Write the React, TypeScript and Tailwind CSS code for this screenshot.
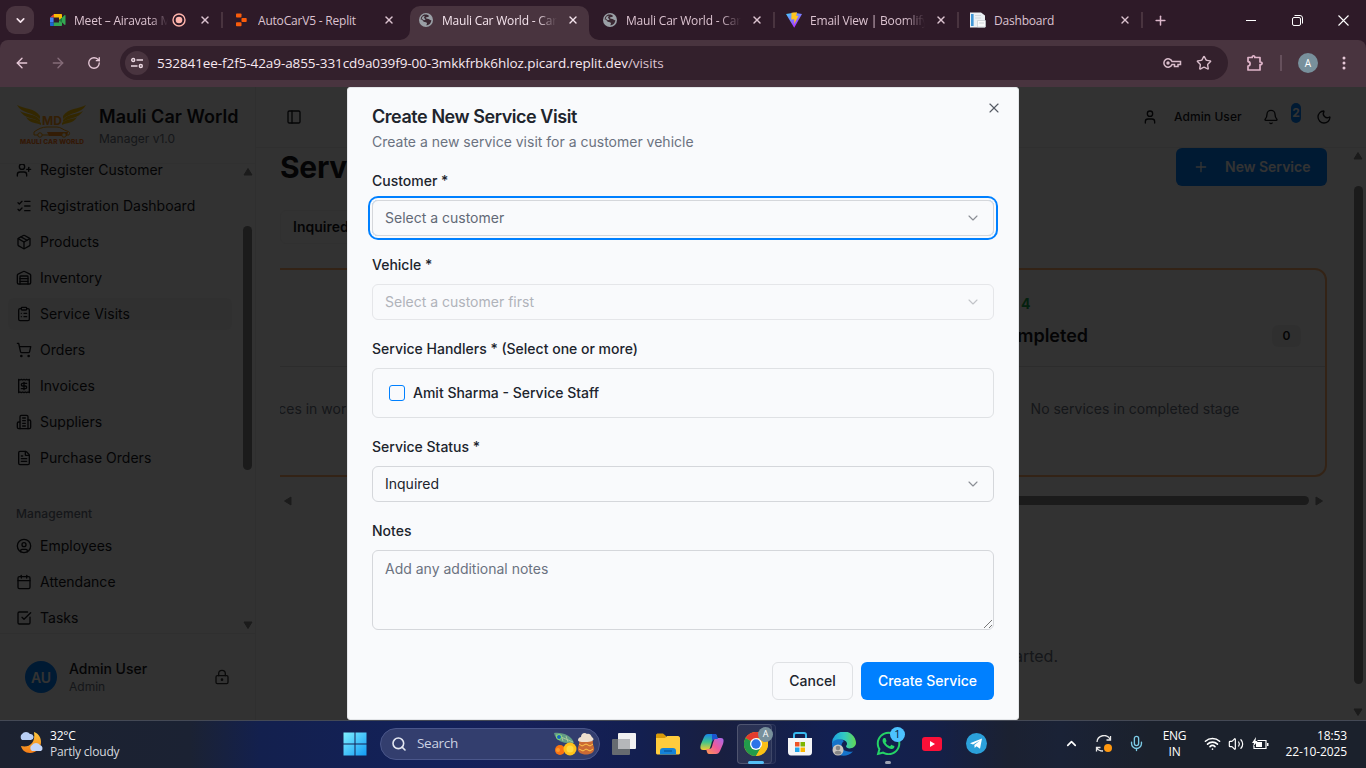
import React from "react";
import {
  ArrowLeft, ArrowRight, RotateCw, X, Plus, ChevronDown, ChevronUp, Star, UserPlus, ListChecks, Package, Warehouse,
  ClipboardList, ShoppingCart, FileText, CircleUser, Calendar, SquareCheckBig, PanelLeft, User, Bell,
  Moon, Search, Mic, Wifi, Volume2, CircleCheckBig,
} from "lucide-react";
import { FaWhatsapp } from "react-icons/fa";

const segoe = "font-['Open_Sans','Noto_Sans',sans-serif]";
const inter = "font-['Inter','Liberation_Sans',sans-serif]";

function Globe() {
  return (
    <svg width="14" height="14" viewBox="0 0 14 14">
      <circle cx="7" cy="7" r="7" fill="#9aa0a6" />
      <path d="M5.2 1.6C7 1.200 9.800 1.800 10 3 9.600 4.200 7.800 3.800 6.800 4.600 6.300 5.600 8 5.800 9.400 6 10.800 6.300 10.800 7.400 12.400 7.200 12.200 9.800 10.500 12 7.600 12.400 7 11.600 8.500 10.800 7.800 9.800 6.800 8.800 4.800 9.200 4 8 3.400 7 2.800 6.600 1.600 6.600 1.800 4.200 3.400 2.200 5.200 1.600Z" fill="#3a2832" />
      <path d="M3.600 3.400 5.800 2.800 5 4.800 6.600 6.800 4.800 7.200 2.600 5.400Z" fill="#9aa0a6" />
    </svg>
  );
}
function MeetIcon() {
  return (
    <svg width="16" height="14" viewBox="0 0 16 14">
      <path d="M0 4.500 4 1v3.500Z" fill="#ea4335" />
      <path d="M4 1h7c.7 0 1 .3 1 1v3L9 7V4.500H4Z" fill="#fbbc04" />
      <path d="M0 4.500h3.600v5H0Z" fill="#4285f4" />
      <path d="M0 9.500h3.800V13H1c-.7 0-1-.3-1-1Z" fill="#1967d2" />
      <path d="M3.800 9.500H9V7l3 2.500V12c0 .7-.3 1-1 1H3.800Z" fill="#34a853" />
      <path d="M9.500 7 14.500 2.300c.5-.4 1-.2 1 .4v8.600c0 .6-.5.8-1 .4Z" fill="#34a853" />
      <path d="M9.500 7 12 4.700V9.300Z" fill="#188038" />
    </svg>
  );
}
function ReplitIcon() {
  return (
    <svg width="12" height="14" viewBox="0 0 12 14" fill="#fa5c0b">
      <rect x="0" y="0.500" width="5.500" height="4" rx="0.800" />
      <rect x="5.500" y="5" width="5.200" height="4" rx="0.800" />
      <rect x="0" y="9.300" width="5.500" height="4" rx="0.800" />
    </svg>
  );
}
function ViteIcon() {
  return (
    <svg width="16" height="16" viewBox="0 0 16 16">
      <defs>
        <linearGradient id="vt" x1="0" y1="0" x2="0.600" y2="1">
          <stop offset="0" stopColor="#41d1ff" /><stop offset="1" stopColor="#b528fe" />
        </linearGradient>
      </defs>
      <path d="M0 2 8 .800 16 2 8.200 15.700Z" fill="url(#vt)" />
      <path d="M5.500.700 11 .2 10.200 4 12.500 3.800 8.200 12 8.300 7.200 5.300 7.600Z" fill="#ffc61c" />
    </svg>
  );
}
function DashIcon() {
  return (
    <svg width="16" height="16" viewBox="0 0 16 16">
      <path d="M0 .500h11l4 3V15.500H0Z" fill="#e9eef2" />
      <rect x="1" y="2" width="2.600" height="12" fill="#3f96d6" />
      <rect x="5" y="3" width="6" height="1" fill="#d0d6dc" /><rect x="5" y="5.500" width="6" height="1" fill="#d0d6dc" />
      <path d="M7.500 8.500h8v6.500h-8Z" fill="#f8fafb" stroke="#c3cad0" strokeWidth=".7" />
      <path d="M9 11h5" stroke="#c3cad0" strokeWidth=".8" />
    </svg>
  );
}

type TabDef = { title: string; icon: React.ReactNode; active?: boolean; rec?: boolean; sep?: boolean; fade?: boolean };
const tabs: TabDef[] = [
  { title: "Meet – Airavata M", icon: <MeetIcon />, rec: true, sep: true, fade: true },
  { title: "AutoCarV5 - Replit", icon: <ReplitIcon /> },
  { title: "Mauli Car World - Car", icon: <Globe />, active: true, fade: true },
  { title: "Mauli Car World - Car", icon: <Globe />, sep: true, fade: true },
  { title: "Email View | Boomlify", icon: <ViteIcon />, sep: true, fade: true },
  { title: "Dashboard", icon: <DashIcon />, sep: true },
];

function Tab({ t }: { t: TabDef }) {
  return (
    <div className="relative h-[34px] w-[184px] shrink-0">
      <div className={`relative flex h-[34px] w-[179px] items-center pb-[6px] pl-[8px] ${t.active ? "rounded-t-[10px] bg-[#49343f]" : ""}`}>
        {t.active && (
          <>
            <svg className="absolute bottom-0 -left-[10px]" width="10" height="10"><path d="M10 0V10H0A10 10 0 0 0 10 0Z" fill="#49343f" /></svg>
            <svg className="absolute -right-[10px] bottom-0" width="10" height="10"><path d="M0 0V10H10A10 10 0 0 1 0 0Z" fill="#49343f" /></svg>
          </>
        )}
        <div className="flex w-[16px] justify-center">{t.icon}</div>
        <div className={`mt-px ml-[8px] h-[20px] overflow-hidden text-[12px] leading-[20px] tracking-[-0.200px] whitespace-nowrap ${t.rec ? "w-[94px]" : "w-[115px]"} ${t.active ? "text-[#f5e4ed]" : "text-[#dcc3d0]"} ${t.fade ? "[mask-image:linear-gradient(to_right,black_82%,transparent)]" : ""}`}>{t.title}</div>
        {t.rec && (
          <svg className="ml-[4px]" width="14" height="14" viewBox="0 0 14 14">
            <circle cx="7" cy="7" r="6" fill="none" stroke="#ffb4ab" strokeWidth="1.400" /><circle cx="7" cy="7" r="3.300" fill="#ffb4ab" />
          </svg>
        )}
        <X size={12} strokeWidth={2.800} className={`mr-[10px] ml-auto ${t.active ? "text-[#f5e4ed]" : "text-[#dcc3d0]"}`} />
      </div>
      {t.sep && <div className="absolute top-[6px] right-[3px] h-[16px] w-[2px] bg-[#49343f]" />}
    </div>
  );
}

function BrowserChrome() {
  return (
    <div className={`h-[87px] shrink-0 bg-[#2e1a28] ${segoe}`}>
      <div className="flex h-[40px] pt-[6px]">
        <div className="ml-[6px] flex h-[28px] w-[28px] items-center justify-center rounded-[9px] bg-[#49343f] text-[#f5e4ed]"><ChevronDown size={13} strokeWidth={3} /></div>
        <div className="ml-[8px] flex">{tabs.map((t, i) => <Tab key={i} t={t} />)}</div>
        <div className="flex h-[28px] w-[29px] items-center justify-center text-[#dcb6ca]"><Plus size={15} strokeWidth={2.400} /></div>
        <div className="ml-auto flex h-[28px] items-center text-white">
          <div className="flex w-[46px] justify-center"><div className="h-px w-[10px] bg-white" /></div>
          <div className="flex w-[46px] justify-center">
            <svg width="11" height="11" viewBox="0 0 11 11" fill="none" stroke="white"><rect x=".5" y="2.500" width="8" height="8" rx="1.500" /><path d="M2.500 .500H8A2.500 2.500 0 0 1 10.500 3V8.500" /></svg>
          </div>
          <div className="flex w-[46px] justify-center">
            <svg width="11" height="11" viewBox="0 0 11 11" stroke="white" strokeWidth="1.100"><path d="M.5.5l10 10M10.500.5l-10 10" /></svg>
          </div>
        </div>
      </div>
      <div className="flex h-[47px] items-center rounded-t-[8px] bg-[#49343f] pb-px">
        <ArrowLeft size={16} strokeWidth={2.100} className="ml-[14px] text-[#e6c8d7]" />
        <ArrowRight size={16} strokeWidth={2.100} className="ml-[20px] text-[#856c79]" />
        <RotateCw size={14} strokeWidth={2.300} className="ml-[21px] text-[#e6c8d7]" />
        <div className="ml-[19px] flex h-[34px] w-[1108px] items-center rounded-full bg-[#33202c] pl-[5px]">
          <div className="flex h-[24px] w-[24px] items-center justify-center rounded-full bg-[#49343f]">
            <svg width="12" height="12" viewBox="0 0 12 12" fill="none" stroke="#ecd9e3" strokeWidth="1.400"><circle cx="2.200" cy="3" r="1.500" /><path d="M5.500 3H12M0 9H6.500" /><circle cx="9.800" cy="9" r="1.500" /></svg>
          </div>
          <div className="ml-[8px] text-[13.5px] leading-[20px] tracking-[-0.080px] whitespace-nowrap text-[#f7e8f0]">532841ee-f2f5-42a9-a855-331cd9a039f9-00-3mkkfrbk6hloz.picard.replit.dev<span className="text-[#dcc3d0]">/visits</span></div>
          <svg className="ml-auto" width="19" height="12" viewBox="0 0 19 12" fill="none" stroke="#d9bccb" strokeWidth="1.500"><path d="M9 4.500A4.200 4.200 0 1 0 9 7.500H11.500V9.500H15V7.500H17.500V4.500Z" /><circle cx="5" cy="6" r="1.700" fill="#d9bccb" stroke="none" /></svg>
          <Star size={16} strokeWidth={2.100} className="mr-[16px] ml-[14px] text-[#d9bccb]" />
        </div>
        <svg className="ml-[18px]" width="18" height="18" viewBox="0 0 18 18" fill="none" stroke="#e0b5ca" strokeWidth="1.700" strokeLinejoin="round"><path d="M2 3.500H6.200C6 1.200 9 1.200 8.800 3.500H14V8C16.800 7.800 16.800 10.800 14 10.600V16H2V12C4.800 11.800 4.800 7.800 2 7.600Z" /></svg>
        <div className="ml-[16px] h-[16px] w-[2px] bg-[#66505c]" />
        <div className="ml-[16px] flex h-[20px] w-[20px] items-center justify-center rounded-full bg-[#78909c] text-[10px] text-white">A</div>
        <svg className="ml-[24px]" width="4" height="16" fill="#e6c8d7"><circle cx="2" cy="3" r="1.500" /><circle cx="2" cy="8" r="1.500" /><circle cx="2" cy="13" r="1.500" /></svg>
      </div>
    </div>
  );
}

function InvoiceIcon() {
  return (
    <svg width="16" height="16" viewBox="0 0 24 24" fill="none" stroke="currentColor" strokeWidth="2" strokeLinecap="round" strokeLinejoin="round">
      <path d="M4 2v20l2-1 2 1 2-1 2 1 2-1 2 1 2-1 2 1V2l-2 1-2-1-2 1-2-1-2 1-2-1-2 1Z" /><path d="M16 8h-6a2 2 0 1 0 0 4h4a2 2 0 1 1 0 4H8" /><path d="M12 17.500v-11" />
    </svg>
  );
}
function BuildingIcon() {
  return (
    <svg width="16" height="16" viewBox="0 0 24 24" fill="none" stroke="currentColor" strokeWidth="2" strokeLinecap="round" strokeLinejoin="round">
      <path d="M6 22V4a2 2 0 0 1 2-2h8a2 2 0 0 1 2 2v18Z" /><path d="M6 12H4a2 2 0 0 0-2 2v6a2 2 0 0 0 2 2h2" /><path d="M18 9h2a2 2 0 0 1 2 2v9a2 2 0 0 1-2 2h-2" /><path d="M10 6h4M10 10h4M10 14h4M10 18h4" />
    </svg>
  );
}
function LockIcon() {
  return (
    <svg width="16" height="16" viewBox="0 0 24 24" fill="none" stroke="currentColor" strokeWidth="2" strokeLinecap="round" strokeLinejoin="round">
      <circle cx="12" cy="16" r="1" /><rect x="3" y="10" width="18" height="12" rx="2" /><path d="M7 10V7a5 5 0 0 1 10 0v3" />
    </svg>
  );
}

const navMain: [string, React.ReactNode][] = [
  ["Register Customer", <UserPlus size={16} />],
  ["Registration Dashboard", <ListChecks size={16} />],
  ["Products", <Package size={16} />],
  ["Inventory", <Warehouse size={16} />],
  ["Service Visits", <ClipboardList size={16} />],
  ["Orders", <ShoppingCart size={16} />],
  ["Invoices", <InvoiceIcon />],
  ["Suppliers", <BuildingIcon />],
  ["Purchase Orders", <FileText size={16} />],
];
const navMgmt: [string, React.ReactNode][] = [
  ["Employees", <CircleUser size={16} />],
  ["Attendance", <Calendar size={16} />],
  ["Tasks", <SquareCheckBig size={16} />],
];

function NavItem({ label, icon, active }: { label: string; icon: React.ReactNode; active?: boolean }) {
  return (
    <div className={`flex h-[32px] w-[224px] shrink-0 items-center gap-2 rounded-md pl-[8px] text-[14px] tracking-[0.020px] ${active ? "bg-[#f0f0f0]" : ""}`}>{icon}<span className="mb-[2px]">{label}</span></div>
  );
}

function Arrow({ dir }: { dir: "up" | "down" | "left" | "right" }) {
  const paths = { up: "M5 1.500 9 8H1Z", down: "M5 8.500 9 2H1Z", left: "M1.500 5 8 1V9Z", right: "M8.500 5 2 1V9Z" };
  return <svg width="10" height="10"><path d={paths[dir]} fill="#858585" stroke="#858585" strokeLinejoin="round" /></svg>;
}

function Logo() {
  return (
    <svg width="72" height="44" viewBox="0 0 72 44">
      <g fill="#ffc400">
        <path d="M1 2C8 6 19 5 24 13V16C17 9 6 11 1 2Z" /><path d="M4 8C10 12 19 10 24 17V19C17 14 9 16 4 8Z" /><path d="M10 14C15 17 20 15 25 20V22C19 19 14 21 10 14Z" />
        <path d="M70 2C63 6 52 5 47 13V16C54 9 65 11 70 2Z" /><path d="M67 8C61 12 52 10 47 17V19C54 14 62 16 67 8Z" /><path d="M61 14C56 17 51 15 46 20V22C52 19 57 21 61 14Z" />
      </g>
      <text x="36" y="22" textAnchor="middle" fontSize="12" fontWeight="700" textLength="20" fill="#ff9d1c" className="font-['Inter']">MD</text>
      <path d="M18 29C22 26 26 24 31 24H41C45 24 47 27 51 28 54 29 54 30 53 32H18Z" fill="none" stroke="#ff9f00" strokeWidth="1" />
      <path d="M31 29H52L51 33H33Z" fill="#ff8a1a" />
      <circle cx="24" cy="32" r="2.200" fill="#fafafa" stroke="#ff9f00" /><circle cx="48" cy="32" r="2.200" fill="#fafafa" stroke="#ff9f00" />
      <text x="36" y="41" textAnchor="middle" fontSize="6.500" fontWeight="800" textLength="64" fill="#ff7a1a" className="font-['Inter']">MAULI CAR WORLD</text>
    </svg>
  );
}

function Sidebar() {
  return (
    <aside className="flex w-[256px] shrink-0 flex-col border-r border-[#e8e8e8] bg-[#f7f7f7]">
      <div className="flex h-[77px] shrink-0 items-center gap-[11px] border-b border-[#ededed] pl-[16px]">
        <Logo />
        <div className="whitespace-nowrap">
          <div className="text-[18px] leading-[28px] font-semibold tracking-[0.030px]">Mauli Car World</div>
          <div className="text-[12px] leading-[16px] text-[#6b7280]">Manager v1.0</div>
        </div>
      </div>
      <div className="flex min-h-0 flex-1 overflow-hidden">
        <div className="-mt-[10px] flex w-[242px] flex-col gap-1 pl-[8px]">
          {navMain.map(([l, i]) => <NavItem key={l} label={l} icon={i} active={l === "Service Visits"} />)}
          <div className="mt-[20px] flex h-[32px] shrink-0 items-center pl-[8px] text-[12px] font-medium tracking-[0.100px] text-[#6b7280]">Management</div>
          <div className="-mt-[4px] flex flex-col gap-1">{navMgmt.map(([l, i]) => <NavItem key={l} label={l} icon={i} />)}</div>
        </div>
        <div className="flex w-[11px] flex-col items-center pt-[3px] pb-[3px]">
          <Arrow dir="up" />
          <div className="mt-[49px] h-[244px] w-[9px] rounded-full bg-[#858585]" />
          <div className="mt-auto flex"><Arrow dir="down" /></div>
        </div>
      </div>
      <div className="flex h-[87px] shrink-0 items-center border-t border-[#e8e8e8] pl-[25px]">
        <div className="flex h-[32px] w-[32px] items-center justify-center rounded-full bg-[#0080ff] text-[14px] font-semibold text-white">AU</div>
        <div className="mb-[2px] ml-[12px]">
          <div className="text-[14px] leading-[20px] font-medium">Admin User</div>
          <div className="text-[12px] leading-[15px] text-[#6b7280]">Admin</div>
        </div>
        <div className="mr-[25px] ml-auto text-[#333]"><LockIcon /></div>
      </div>
    </aside>
  );
}

function StageCard({ num, title, empty }: { num: string; title: string; empty: string }) {
  return (
    <div className="h-[209px] w-[384px] shrink-0 rounded-[12px] border-2 border-[#ffb06e]">
      <div className="flex h-[97px] flex-col border-b border-[#dcdcdc] px-[24px] pt-[24px]">
        <div className="pl-[2px] text-[14px] leading-[20px] font-bold tracking-[1.150px] text-[#16a34a]">Stage {num}</div>
        <div className="mt-[8px] flex items-center justify-between">
          <div className="flex items-center gap-2 text-[18px] leading-[28px] font-semibold"><CircleCheckBig size={16} />{title}</div>
          <div className="flex h-[22px] w-[29px] items-center justify-center rounded-md bg-[#ececec] text-[12px] font-semibold">0</div>
        </div>
      </div>
      <div className="mt-[32px] text-center text-[14px] leading-[20px] text-[#6b7280]">{empty}</div>
    </div>
  );
}

function Main() {
  return (
    <main className="flex min-w-0 flex-1 flex-col bg-[#fafafa]">
      <div className="flex h-[61px] shrink-0 items-center border-b border-[#e8e8e8] pl-[30px]">
        <PanelLeft size={16} />
        <User size={16} className="mr-[16px] ml-auto" />
        <div className="w-[67px] text-[12px] font-medium tracking-[0.080px] whitespace-nowrap">Admin User</div>
        <Bell size={16} className="ml-[22px]" />
        <div className="mb-[8px] ml-[12px] flex h-[20px] w-[10px] items-center justify-center rounded-full bg-[#0080ff] text-[12px] font-bold text-white">2</div>
        <Moon size={16} className="mr-[34px] ml-[15px]" />
      </div>
      <div className="flex min-h-0 flex-1">
        <div className="flex min-w-0 flex-1 flex-col pl-[24px]">
          <div className="flex h-[38px] w-[1047px] items-center justify-between">
            <h1 className="text-[30px] leading-[36px] font-bold tracking-[-0.300px]">Service Visits</h1>
            <div className="flex h-[38px] w-[151px] items-center gap-[16px] rounded-md bg-[#0080ff] pl-[17px] text-[14px] font-semibold text-white"><Plus size={16} /><span className="mb-[2px]">New Service</span></div>
          </div>
          <div className="mt-[24px] flex h-[34px] w-[300px] items-center rounded-md border border-[#eeeeee] pb-[2px] pl-[12px] text-[14px] font-semibold">Inquired</div>
          <div className="mt-[24px] flex w-[1047px] justify-end gap-6 overflow-hidden">
            <StageCard num="2" title="Working" empty="No services in working stage" />
            <StageCard num="3" title="Ready" empty="No services in ready stage" />
            <StageCard num="4" title="Completed" empty="No services in completed stage" />
          </div>
          <div className="mt-[18px] flex h-[11px] w-[1047px] items-center pl-[3px]">
            <Arrow dir="left" />
            <div className="ml-auto h-[9px] w-[640px] rounded-full bg-[#858585]" />
            <div className="mr-[3px] ml-[5px]"><Arrow dir="right" /></div>
          </div>
          <div className="mt-[138px] w-[778px] text-right text-[16px] leading-[24px] text-[#6b7280]">No service visits found. Create your first visit to get started.</div>
        </div>
        <div className="flex w-[16px] flex-col items-center pt-[3px] pb-[3px]">
          <Arrow dir="up" />
          <div className="mt-[25px] h-[498px] w-[9px] rounded-full bg-[#858585]" />
          <div className="mt-auto flex"><Arrow dir="down" /></div>
        </div>
      </div>
    </main>
  );
}

function Field({ label, children }: { label: string; children: React.ReactNode }) {
  return (
    <div className="mt-[18px]">
      <div className="mb-[8px] h-[22px] text-[14px] leading-[22px] font-medium">{label}</div>
      {children}
    </div>
  );
}
function SelectBox({ text, cls }: { text: string; cls: string }) {
  return (
    <div className={`flex h-[36px] items-center justify-between rounded-md border px-[12px] text-[14px] ${cls}`}>
      <span className="mb-[2px]">{text}</span><ChevronDown size={16} strokeWidth={1.700} className="text-[#8b8e95]" />
    </div>
  );
}

function Dialog() {
  return (
    <div className="absolute top-0 left-[347px] z-20 flex h-[633px] w-[672px] flex-col rounded-[3px] border border-[#e3e5e8] bg-[#f9fafc] px-[24px] pt-[20px] text-[#20242c]">
      <X size={16} strokeWidth={1.700} className="absolute top-[12px] right-[16px] text-[#555a63]" />
      <div className="text-[18px] leading-[18px] font-semibold tracking-[-0.450px]">Create New Service Visit</div>
      <div className="mt-[6px] text-[14px] leading-[20px] text-[#6b7280]">Create a new service visit for a customer vehicle</div>
      <Field label="Customer *"><SelectBox text="Select a customer" cls="border-[#d5d7db] text-[#626976] ring-2 ring-[#0080ff] ring-offset-2 ring-offset-[#f9fafc]" /></Field>
      <Field label="Vehicle *"><SelectBox text="Select a customer first" cls="border-[#e5e6e9] text-[#b0b3ba] [&>svg]:opacity-50" /></Field>
      <Field label="Service Handlers * (Select one or more)">
        <div className="flex h-[50px] items-center gap-2 rounded-md border border-[#dfe1e4] pl-[16px]">
          <div className="h-[16px] w-[16px] rounded-[3px] border border-[#0080ff]" />
          <span className="mb-[2px] text-[14px] font-medium">Amit Sharma - Service Staff</span>
        </div>
      </Field>
      <Field label="Service Status *"><SelectBox text="Inquired" cls="border-[#d5d7db]" /></Field>
      <Field label="Notes">
        <div className="relative h-[80px] rounded-md border border-[#d5d7db] px-[12px] py-[8px] text-[14px] leading-[20px] text-[#6b7280]">
          Add any additional notes
          <svg className="absolute right-0 bottom-0" width="10" height="10" stroke="#777" strokeWidth="1"><path d="M1 9 9 1M6 9 9 6" /></svg>
        </div>
      </Field>
      <div className="mt-[32px] flex justify-end gap-2 text-[14px] font-medium">
        <div className="flex h-[38px] w-[81px] items-center justify-center rounded-md border border-[#dfe1e4] pb-[2px]">Cancel</div>
        <div className="flex h-[38px] w-[133px] items-center justify-center rounded-md bg-[#0080ff] pb-[2px] text-white">Create Service</div>
      </div>
    </div>
  );
}

function Cell({ children, active }: { children: React.ReactNode; active?: boolean }) {
  return <div className={`relative flex h-[40px] w-[44px] items-center justify-center ${active ? "rounded-[4px]" : ""}`}>{active && <><div className="absolute inset-y-0 left-[3px] w-[39px] rounded-[4px] border border-white/8 bg-white/3" /><div className="absolute inset-y-0 left-[3px] w-[35px] rounded-[4px] border border-white/10 bg-white/6" /></>}{children}</div>;
}

function Taskbar() {
  return (
    <div className={`flex h-[48px] shrink-0 items-center border-t border-[#444955] bg-[linear-gradient(to_right,#1c2230_0px,#1b2233_190px,#13204e_260px,#13215a_440px,#16205a_520px,#131f50_640px,#191f40_720px,#122052_830px,#14204a_930px,#1b2131_1010px,#1a2236_1060px,#1b212c_1150px)] pb-[2px] text-white ${segoe}`}>
      <div className="flex w-[333px] items-center">
        <svg className="mb-[3px] ml-[18px]" width="26" height="24" viewBox="0 0 26 24">
          <defs><linearGradient id="mn" x1="0" y1="0" x2="0" y2="1"><stop offset="0" stopColor="#ffc83d" /><stop offset="1" stopColor="#f47c16" /></linearGradient></defs>
          <path d="M16 2C26 5 26 22 12 23 7 23 4 20 3 16 10 18 18 14 16 2Z" fill="url(#mn)" />
          <path d="M4 10A4 4 0 0 1 4 4 5 5 0 0 1 12 4 3 3 0 0 1 13 10Z" fill="#b9cff5" />
          <path d="M14 21A3.500 3.500 0 0 1 14 15 5 5 0 0 1 22 15 3.300 3.300 0 0 1 23 21Z" fill="#c3d6f8" />
        </svg>
        <div className="ml-[6px] text-[12px] leading-[16px] tracking-[-0.200px]"><div>32°C</div><div className="text-[#d6d9df]">Partly cloudy</div></div>
      </div>
      <Cell>
        <svg width="24" height="24" viewBox="0 0 24 24"><defs><linearGradient id="wn" x1="0" y1="0" x2="1" y2="1"><stop offset="0" stopColor="#7ff0ff" /><stop offset="1" stopColor="#129bf5" /></linearGradient></defs><path d="M.5.500H11.500V11.500H.500ZM12.500.500H23.500V11.500H12.500ZM.5 12.500H11.500V23.500H.500ZM12.500 12.500H23.500V23.500H12.500Z" fill="url(#wn)" /></svg>
      </Cell>
      <div className="mr-[2px] ml-[3px] flex h-[32px] w-[220px] items-center rounded-full border border-[#4a568a] bg-[#333e6e] pl-[10px]">
        <Search size={16} strokeWidth={2.400} className="text-[#e3e7f1]" />
        <span className="ml-[10px] text-[13.5px] tracking-[-0.300px] text-[#ccd2e2]">Search</span>
        <svg className="ml-auto mr-[4px]" width="42" height="24" viewBox="0 0 42 24">
          <path d="M1 1C10 0 19 4 21 11 12 12 3 10 1 1Z" fill="#629c86" /><path d="M3 3 20 10M8 3 10 9M13 4 15 10" stroke="#b7cf9e" strokeWidth=".8" /><circle cx="6" cy="5" r="2.500" fill="#1565c0" stroke="#8be36e" />
          <circle cx="7" cy="18" r="5" fill="#f87312" /><circle cx="5" cy="18" r="2" fill="#ff9a2b" /><circle cx="17" cy="17" r="6.500" fill="#ffc21a" /><circle cx="17" cy="17" r="3.500" fill="#ffda42" />
          <path d="M26 9H40C39 13 42 15 41 18 40 24 26 24 25 18 24 15 27 13 26 9Z" fill="#cb6a34" /><path d="M25 8C25 6 27 5 28 5 28 1 32 0 34 2 38 1 38 5 40 6 42 9 37 10 33 10S25 10 25 8Z" fill="#efe0ce" /><path d="M26 12 29 14 33 12 37 14 40 12M26 17 30 19 33 17 37 19 40 17" stroke="#ffc64a" fill="none" />
        </svg>
      </div>
      <Cell><svg width="24" height="22" viewBox="0 0 24 22"><rect x="6" y="0" width="18" height="16" rx="1" fill="#f1f1f1" /><rect x="0" y="6" width="18" height="16" rx="1" fill="#666b70" /><rect x="6" y="6" width="12" height="10" fill="#b5b7ba" /></svg></Cell>
      <Cell><svg width="24" height="22" viewBox="0 0 24 22"><path d="M0 2C0 1 1 .500 2 .500H7L10 3V8H0Z" fill="#d89a09" /><path d="M0 5 9 5 11 3H22C23 3 24 4 24 5V20C24 21 23 21.500 22 21.500H2C1 21.500 0 21 0 20Z" fill="#ffcc3d" /><path d="M4 21.500V18C4 16 5 15 7 15H17C19 15 20 16 20 18V21.500Z" fill="#1583d8" /><path d="M8 18H16" stroke="#0b5da4" strokeWidth="1.500" /></svg></Cell>
      <Cell>
        <svg width="24" height="22" viewBox="0 0 24 22">
          <defs>
            <linearGradient id="c1" x1="0" y1="0" x2="0" y2="1"><stop offset="0" stopColor="#1784e8" /><stop offset=".5" stopColor="#3fc48d" /><stop offset="1" stopColor="#f5cb30" /></linearGradient>
            <linearGradient id="c2" x1="1" y1="0" x2="0" y2="1"><stop offset="0" stopColor="#a569ee" /><stop offset=".5" stopColor="#ef5a9a" /><stop offset="1" stopColor="#ff9c4d" /></linearGradient>
          </defs>
          <path d="M8 1H15C17 1 17 4 18 6H15C12 6 12 9 11 12L10 15C9 17 8 17 6 17H3C0 17 0 14 1 11L4 4C5 2 6 1 8 1Z" fill="url(#c1)" />
          <path d="M16 21H9C7 21 7 18 6 16H9C12 16 12 13 13 10L14 7C15 5 16 5 18 5H21C24 5 24 8 23 11L20 18C19 20 18 21 16 21Z" fill="url(#c2)" />
          <path d="M12 1H15C17 1 17 4 18 6H15C13 6 12.500 7 12 9Z" fill="#1b55cd" />
        </svg>
      </Cell>
      <Cell active>
        <svg className="relative" width="24" height="24" viewBox="0 0 24 24"><circle cx="12" cy="12" r="12" fill="#fbc116" /><path d="M12 12 1.600 6A12 12 0 0 1 22.400 6Z" fill="#e33b2e" /><path d="M1.600 6A12 12 0 0 0 12 24L17.200 15 12 12Z" fill="#229a4b" /><path d="M12 12V6H22.400A12 12 0 0 1 12 24L17.200 15Z" fill="#fbc116" /><circle cx="12" cy="12" r="6" fill="white" /><circle cx="12" cy="12" r="4.700" fill="#2d74e8" /></svg>
        <div className="absolute top-[3px] left-[24px] flex h-[15px] w-[15px] items-center justify-center rounded-full bg-[#78909c] text-[9px] text-white">A</div>
        <div className="absolute bottom-0 left-[14px] h-[3px] w-[16px] rounded-full bg-[#55bff5]" />
      </Cell>
      <Cell><svg width="24" height="24" viewBox="0 0 24 24"><path d="M6 7V3C6 1 7 1 8 1H16C17 1 18 1 18 3V7" fill="none" stroke="#38b9ee" strokeWidth="2" /><path d="M0 6H24V20C24 22 23 23.500 21 23.500H3C1 23.500 0 22 0 20Z" fill="#f4f5f7" /><path d="M7 10H11.500V14.500H7Z" fill="#ee5325" /><path d="M12.500 10H17V14.500H12.500Z" fill="#7db500" /><path d="M7 15.500H11.500V20H7Z" fill="#20a5ea" /><path d="M12.500 15.500H17V20H12.500Z" fill="#fcb700" /></svg></Cell>
      <Cell>
        <svg width="24" height="24" viewBox="0 0 24 24"><defs><linearGradient id="ed" x1="0" y1="0" x2="1" y2="0"><stop offset="0" stopColor="#1b9fe0" /><stop offset=".5" stopColor="#31c7c4" /><stop offset="1" stopColor="#61d853" /></linearGradient></defs>
          <path d="M0 12A12 12 0 1 1 24 11C24 17 14 18 14 14 17 11 13 7 8 8 4 8 0 11 0 12Z" fill="url(#ed)" /><path d="M0 12C1 7 9 6 12 9 7 13 9 21 21 19.500 13 28 0 23 0 12Z" fill="#1573ca" />
          <circle cx="6" cy="18" r="5.500" fill="#c9c5c0" /><circle cx="6" cy="16" r="2.300" fill="#858585" /><path d="M2.500 21C3 18 9 18 9.500 21 8 23 4 23 2.500 21Z" fill="#858585" />
        </svg>
      </Cell>
      <Cell>
        <FaWhatsapp size={27} className="text-[#25d366]" />
        <div className="absolute top-[3px] left-[24px] flex h-[15px] w-[15px] items-center justify-center rounded-full bg-[#4cc2ff] text-[11px] text-[#0b2038]">1</div>
        <div className="absolute bottom-0 left-[19px] h-[3px] w-[6px] rounded-full bg-[#9da3b2]" />
      </Cell>
      <Cell><svg width="20" height="14" viewBox="0 0 20 14"><rect width="20" height="14" rx="3" fill="#fa1038" /><path d="M8 4 13 7 8 10Z" fill="white" /></svg></Cell>
      <Cell><svg width="21" height="21" viewBox="0 0 21 21"><circle cx="10.500" cy="10.500" r="10.500" fill="#2ba0da" /><path d="M4 10.300 16 5.500 14 15.800 10.500 13.200 8.700 15 8.300 12 14 7.500 7 11.500Z" fill="white" /></svg></Cell>
      <div className="ml-auto flex items-center">
        <ChevronUp size={15} strokeWidth={2.600} />
        <svg className="ml-[16px]" width="18" height="18" viewBox="0 0 18 18" fill="none" stroke="#e8e8e8" strokeWidth="1.300"><path d="M2 7A7 7 0 0 1 15 4M15.500 1V5H11.500M2 13C3 15 5 16 8 16M1.500 16.500V12.500H5.500" /><circle cx="13" cy="13" r="4" fill="#ff980f" stroke="none" /></svg>
        <Mic size={17} strokeWidth={1.900} className="ml-[15px] text-[#7ccbe6]" />
        <div className="ml-[13px] w-[33px] text-center text-[12px] leading-[16px] tracking-[-0.300px]">ENG<br />IN</div>
        <Wifi size={17} strokeWidth={2.300} className="ml-[13px]" />
        <Volume2 size={16} strokeWidth={1.800} className="ml-[7px]" />
        <svg className="ml-[8px]" width="17" height="14" viewBox="0 0 17 14"><path d="M5.500 3.500H14V11.500H2V9" fill="none" stroke="white" strokeWidth="1.200" /><rect x="4" y="5" width="6" height="5" fill="white" /><path d="M15 6H16.500V9H15Z" fill="white" /><path d="M4 0 0 6H2L1 10 5.500 4H3.500Z" fill="white" /></svg>
        <div className="mr-[19px] ml-[8px] w-[70px] text-right text-[12px] leading-[16px] tracking-[-0.100px] whitespace-nowrap">18:53<br />22-10-2025</div>
      </div>
    </div>
  );
}

export default function App() {
  return (
    <div className="flex h-[768px] w-[1366px] flex-col overflow-hidden">
      <BrowserChrome />
      <div className={`relative flex h-[633px] shrink-0 overflow-hidden text-[#16181d] ${inter}`}>
        <Sidebar />
        <Main />
        <div className="absolute inset-0 z-10 bg-black/80" />
        <Dialog />
      </div>
      <Taskbar />
    </div>
  );
}
